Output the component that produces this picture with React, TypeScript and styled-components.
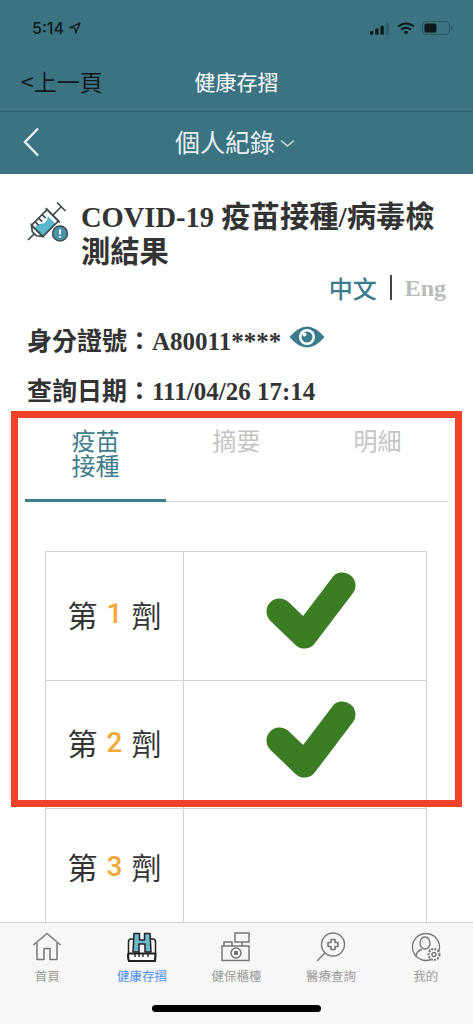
import React from "react";
import styled, { createGlobalStyle } from "styled-components";

const Global = createGlobalStyle`
  html, body { margin: 0; padding: 0; background: #fff; }
  * { box-sizing: border-box; }
  #root { width: 473px; height: 1024px; }
`;

const sans = `"Noto Sans CJK TC", "Noto Sans", sans-serif`;
const serif = `"Liberation Serif", "Noto Sans CJK TC", serif`;

const Page = styled.div`
  position: relative;
  width: 473px;
  height: 1024px;
  display: flex;
  flex-direction: column;
  overflow: hidden;
  background: #fff;
  font-family: ${sans};
`;
const Header = styled.header`
  background: #3b7382;
  height: 174px;
  flex: none;
`;
const StatusBar = styled.div`
  height: 56px;
  padding: 0 20px 0 32px;
  display: flex;
  align-items: center;
  justify-content: space-between;
  color: #0d1a1e;
`;
const Time = styled.div`
  display: flex;
  align-items: center;
  gap: 5px;
  font: 500 16px Inter, sans-serif;
`;
const StatusIcons = styled.div`
  display: flex;
  align-items: center;
  gap: 7px;
`;
const NavRow = styled.div`
  position: relative;
  height: 56px;
  padding: 0 0 6px 21px;
  display: flex;
  align-items: center;
  border-bottom: 1px solid #2d5f6c;
`;
const BackLink = styled.span`
  font-size: 23px;
  color: #10191c;
  font-weight: 400;
`;
const NavTitle = styled.span`
  position: absolute;
  left: 0;
  right: 0;
  text-align: center;
  font-size: 21px;
  color: #fff;
`;
const SubRow = styled.div`
  position: relative;
  height: 62px;
  padding: 0 3px 4px 0;
  display: flex;
  align-items: center;
  justify-content: center;
  gap: 5px;
  color: #e9f0f2;
  font-size: 25px;
  font-weight: 400;
`;
const BackChevron = styled.svg`
  position: absolute;
  left: 22px;
  top: 15px;
`;
const Content = styled.main`
  flex: 1;
  min-height: 0;
  overflow: hidden;
  padding: 26px 25px 0;
  color: #333;
`;
const TitleRow = styled.div`
  display: flex;
  gap: 12px;
  padding-left: 2px;
`;
const Title = styled.h1`
  margin: 0;
  font: 700 29.3px/34px ${serif};
  color: #333;
`;
const TitleLatin = styled.span`
  font-size: 28.5px;
`;
const Lang = styled.div`
  height: 35px;
  margin-top: 1px;
  padding-right: 2px;
  display: flex;
  align-items: center;
  justify-content: flex-end;
  gap: 13px;
  font: 700 24px/34px ${serif};
`;
const LangOn = styled.span`
  color: #3b7c8c;
  font: 500 24px/34px ${sans};
`;
const LangOff = styled.span`
  color: #bbb;
`;
const LangDivider = styled.i`
  width: 2px;
  height: 25px;
  background: #444;
`;
const InfoLine = styled.div`
  height: 50px;
  padding-left: 2px;
  display: flex;
  align-items: center;
  gap: 8px;
  font: 700 25px/30px ${serif};
  color: #333;
`;
const Info = styled.div`
  padding-top: 12px;
`;
const Tabs = styled.div`
  display: grid;
  grid-template-columns: repeat(3, 141px);
  height: 90px;
  margin-top: -5px;
  border-bottom: 1px solid #d4d4d4;
`;
const Tab = styled.div<{ $active?: boolean }>`
  height: 90px;
  padding-top: 15px;
  text-align: center;
  font-size: 24px;
  line-height: 25px;
  font-weight: 400;
  color: ${(p) => (p.$active ? "#3f7d8c" : "#c4c4c4")};
  border-bottom: 3px solid ${(p) => (p.$active ? "#3f7d8c" : "transparent")};
`;
const TabLabel = styled.div`
  width: 50px;
  margin: 0 auto;
`;
const Table = styled.div`
  width: 382px;
  margin: 49px 0 0 20px;
  border: 1px solid #d2d2d2;
  border-bottom: none;
`;
const Row = styled.div<{ $h: number }>`
  display: grid;
  grid-template-columns: 138px 1fr;
  height: ${(p) => p.$h}px;
  border-bottom: 1px solid #d2d2d2;
`;
const DoseCell = styled.div`
  display: flex;
  align-items: center;
  justify-content: center;
  gap: 9px;
  padding-bottom: 5px;
  border-right: 1px solid #d2d2d2;
  font-size: 30px;
  font-weight: 400;
  color: #333;
`;
const DoseNum = styled.span`
  color: #f3a935;
  font: 500 28px Roboto, sans-serif;
`;
const CheckCell = styled.div`
  display: flex;
  align-items: center;
  justify-content: center;
`;
const CheckMark = styled.svg`
  overflow: visible;
`;
const TabBar = styled.nav`
  flex: none;
  height: 102px;
  background: #f7f7f7;
  border-top: 1px solid #d0d0d0;
`;
const TabBarItems = styled.div`
  display: grid;
  grid-template-columns: repeat(5, 1fr);
  padding-top: 9px;
`;
const BarItem = styled.div<{ $active?: boolean }>`
  display: flex;
  flex-direction: column;
  align-items: center;
  gap: 7px;
  font-size: 12.5px;
  line-height: 14px;
  color: ${(p) => (p.$active ? "#4a8ef0" : "#9a9a9a")};
`;
const HomeIndicator = styled.div`
  width: 169px;
  height: 7px;
  margin: 22px auto 0;
  border-radius: 4px;
  background: #000;
`;
const RedBox = styled.div`
  position: absolute;
  left: 11px;
  top: 411px;
  width: 451px;
  height: 396px;
  border: 7px solid #ee4328;
  pointer-events: none;
`;

const Check = () => (
  <CheckMark width="100" height="90" viewBox="0 0 100 90">
    <path d="M24.5 40.5 L49.5 64.5 L87.5 14.5" fill="none" stroke="#3a7d22" strokeWidth="26" strokeLinecap="round" strokeLinejoin="round" />
  </CheckMark>
);

const Syringe = () => (
  <svg width="42" height="44" viewBox="0 0 42 44" style={{ flex: "none" }}>
    <g transform="translate(1,40) rotate(-45)" fill="none" stroke="#3d4a4d" strokeWidth="1.7">
      <path d="M0 0 H9" />
      <path d="M9 -3 L13 -8 V8 L9 3 Z" />
      <path d="M13 8 H31 V-3 Q26 2 21 -2 T13 -3 Z" fill="#5bb8cc" stroke="none" />
      <rect x="13" y="-8" width="22" height="16" />
      <path d="M35 -10 V10 M35 0 H47 M47 -6 V6" />
      <path d="M18 -8 V-3 M23 -8 V-3 M28 -8 V-3" />
    </g>
    <circle cx="33" cy="33.5" r="7.5" fill="#4b93a5" stroke="#3d4a4d" strokeWidth="1.4" />
    <path d="M33 29.5 V34.5" stroke="#fff" strokeWidth="1.8" />
    <circle cx="33" cy="37" r="1" fill="#fff" />
  </svg>
);

const Eye = () => (
  <svg width="36" height="24" viewBox="0 0 36 24" style={{ marginTop: -10 }}>
    <path d="M0.5 12 Q18 -9 35.5 12 Q18 33 0.5 12 Z" fill="#3b7c8c" />
    <circle cx="18" cy="12" r="8" fill="#fff" />
    <circle cx="18" cy="12" r="5.5" fill="#3b7c8c" />
    <circle cx="15.5" cy="9.5" r="2" fill="#fff" />
  </svg>
);

const HomeIcon = () => (
  <svg width="30" height="30" viewBox="0 0 30 30" fill="none" stroke="#777" strokeWidth="1.5" strokeLinejoin="round">
    <path d="M1.5 13 L15 1.5 L28.5 13" />
    <path d="M5 11 V27.5 H12 V16.5 H18 V27.5 H25 V11" />
  </svg>
);
const HealthIcon = () => (
  <svg width="30" height="30" viewBox="0 0 30 30" fill="none" stroke="#222" strokeWidth="1.5" strokeLinejoin="round">
    <path d="M7 1.5 H12.5 V8 H17.5 V1.5 H23 L24 20 H18 V12 H12 V20 H6 Z" fill="#6fb8cc" />
    <path d="M6 7 H4 Q1.5 7 1.5 10 V21 M24 7 H26 Q28.5 7 28.5 10 V21" />
    <path d="M1.5 21.5 H28.5 L28 29 H2 Q0.5 25 1.5 21.5 Z" strokeWidth="2.2" fill="#fff" />
    <path d="M8 21 V25 M12 20 V25 M16 22 V25 M21 21 V25" strokeWidth="1.4" />
  </svg>
);
const CounterIcon = () => (
  <svg width="30" height="30" viewBox="0 0 30 30" fill="none" stroke="#777" strokeWidth="1.5">
    <rect x="14" y="1" width="14" height="9" />
    <path d="M21 10 V14" />
    <path d="M1 28.5 V14 H28 V28.5 Z" />
    <path d="M3 14 V10 H11 V14" />
    <circle cx="15" cy="21" r="5" />
    <rect x="13" y="19" width="4" height="4" fill="#777" stroke="none" />
  </svg>
);
const MedicalIcon = () => (
  <svg width="30" height="30" viewBox="0 0 30 30" fill="none" stroke="#777" strokeWidth="1.4">
    <circle cx="17" cy="12.5" r="11.5" />
    <path d="M1 29 L9 21" />
    <path d="M15 7.5 H19 V10.5 H22 V14.5 H19 V17.5 H15 V14.5 H12 V10.5 H15 Z" strokeLinejoin="round" strokeWidth="1.6" />
  </svg>
);
const MeIcon = () => (
  <svg width="30" height="30" viewBox="0 0 30 30" fill="none" stroke="#777" strokeWidth="1.3">
    <circle cx="15" cy="15" r="13.5" />
    <ellipse cx="14" cy="11" rx="5" ry="6" />
    <path d="M5 25 Q5 19 11 17.5 M18 17.5 Q19 18 20 18.5" />
    <circle cx="23" cy="22.5" r="5.5" fill="#f7f7f7" strokeWidth="2" strokeDasharray="2 1.2" />
    <circle cx="23" cy="22.5" r="2" />
  </svg>
);

const doses = [
  { n: 1, h: 129, done: true },
  { n: 2, h: 128, done: true },
  { n: 3, h: 120, done: false },
];

const tabs = [
  { label: "首頁", icon: <HomeIcon /> },
  { label: "健康存摺", icon: <HealthIcon />, active: true },
  { label: "健保櫃檯", icon: <CounterIcon /> },
  { label: "醫療查詢", icon: <MedicalIcon /> },
  { label: "我的", icon: <MeIcon /> },
];

export default function App() {
  return (
    <Page>
      <Global />
      <Header>
        <StatusBar>
          <Time>
            5:14
            <svg width="12" height="12" viewBox="0 0 12 12" fill="none" stroke="#0d1a1e" strokeWidth="1.3">
              <path d="M11 1 L1 5.5 L6 6.2 L6.8 11 Z" strokeLinejoin="round" />
            </svg>
          </Time>
          <StatusIcons>
            <svg width="20" height="13" viewBox="0 0 21 13">
              <rect x="0" y="9" width="3.5" height="4" rx="1" fill="#0d1a1e" />
              <rect x="5.5" y="6.5" width="3.5" height="6.5" rx="1" fill="#0d1a1e" />
              <rect x="11" y="3.5" width="3.5" height="9.5" rx="1" fill="#0d1a1e" />
              <rect x="16.5" y="0.5" width="3.5" height="12.5" rx="1" fill="#2f5f6c" />
            </svg>
            <svg width="18" height="13" viewBox="0 0 18 13" fill="none" stroke="#0d1a1e" strokeWidth="2">
              <path d="M1 4.5 Q9 -1.5 17 4.5" />
              <path d="M4 7.7 Q9 3.8 14 7.7" />
              <path d="M9 12.5 L6.5 10 Q9 8.2 11.5 10 Z" fill="#0d1a1e" stroke="none" />
            </svg>
            <svg width="31" height="14" viewBox="0 0 31 14">
              <rect x="0.5" y="0.5" width="27" height="13" rx="3.5" fill="none" stroke="#2a5562" />
              <rect x="2.5" y="2.5" width="12" height="9" rx="1.5" fill="#0d1a1e" />
              <rect x="29" y="5" width="1.5" height="4" rx="0.7" fill="#2a5562" />
            </svg>
          </StatusIcons>
        </StatusBar>
        <NavRow>
          <BackLink>&lt;上一頁</BackLink>
          <NavTitle>健康存摺</NavTitle>
        </NavRow>
        <SubRow>
          <BackChevron width="19" height="30" viewBox="0 0 19 30" fill="none" stroke="#e9f0f2" strokeWidth="2.4">
            <path d="M16 1.5 L3 15 L16 28.5" />
          </BackChevron>
          個人紀錄
          <svg width="15" height="9" viewBox="0 0 15 9" fill="none" stroke="#c9d8dc" strokeWidth="1.6" style={{ marginTop: 4 }}>
            <path d="M1 1.5 L7.5 7 L14 1.5" />
          </svg>
        </SubRow>
      </Header>
      <Content>
        <TitleRow>
          <Syringe />
          <Title>
            <TitleLatin>COVID-19</TitleLatin> 疫苗接種/病毒檢測結果
          </Title>
        </TitleRow>
        <Lang>
          <LangOn>中文</LangOn>
          <LangDivider />
          <LangOff>Eng</LangOff>
        </Lang>
        <Info>
          <InfoLine>
            身分證號：A80011**** <Eye />
          </InfoLine>
          <InfoLine>查詢日期：111/04/26 17:14</InfoLine>
        </Info>
        <Tabs>
          <Tab $active>
            <TabLabel>疫苗接種</TabLabel>
          </Tab>
          <Tab>
            <TabLabel>摘要</TabLabel>
          </Tab>
          <Tab>
            <TabLabel>明細</TabLabel>
          </Tab>
        </Tabs>
        <Table>
          {doses.map((d) => (
            <Row key={d.n} $h={d.h}>
              <DoseCell>
                第<DoseNum>{d.n}</DoseNum>劑
              </DoseCell>
              <CheckCell>{d.done && <Check />}</CheckCell>
            </Row>
          ))}
        </Table>
      </Content>
      <TabBar>
        <TabBarItems>
          {tabs.map((t) => (
            <BarItem key={t.label} $active={t.active}>
              {t.icon}
              {t.label}
            </BarItem>
          ))}
        </TabBarItems>
        <HomeIndicator />
      </TabBar>
      <RedBox />
    </Page>
  );
}
